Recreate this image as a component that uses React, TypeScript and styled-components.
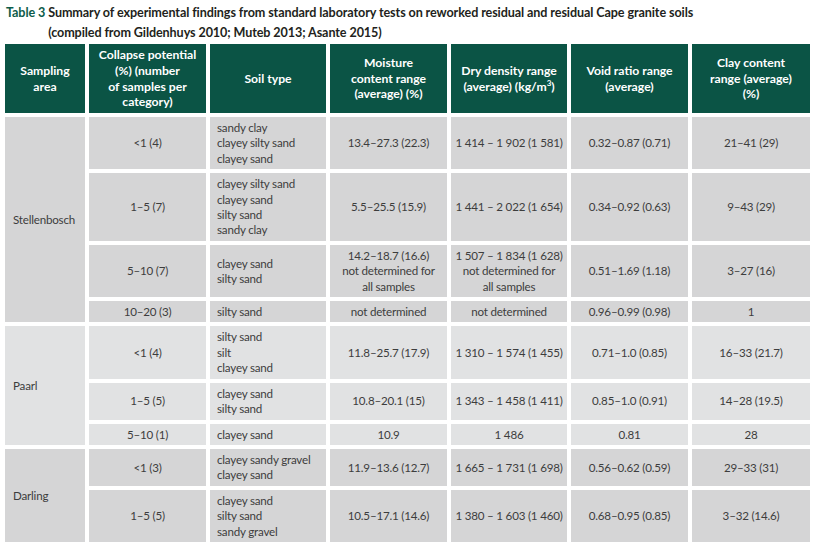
import React from "react";
import styled, { createGlobalStyle } from "styled-components";

const Global = createGlobalStyle`
  html, body { margin: 0; padding: 0; background: #ffffff; }
  body { font-family: Lato, "Open Sans", "Liberation Sans", sans-serif; }
`;

const Page = styled.div`
  width: 814px;
  height: 546px;
  box-sizing: border-box;
  padding: 3px 4px 0 5px;
  overflow: hidden;
`;

const Caption = styled.div`
  display: flex;
  align-items: flex-start;
  font-family: Lato, sans-serif;
  font-weight: 700;
  font-size: 12.6px;
  letter-spacing: -0.1px;
  line-height: 20px;
  color: #231f20;
  padding-left: 1px;
  margin-bottom: 1px;
`;

const CaptionLabel = styled.span`
  color: #0d5c4a;
  white-space: pre;
`;

const CaptionText = styled.span`
  display: block;
`;

const Grid = styled.div`
  display: grid;
  grid-template-columns: 80px 117px 116px 117px 116px 117px 118px;
  column-gap: 4px;
  row-gap: 4px;
`;

const Head = styled.div`
  background: #0b5445;
  color: #ffffff;
  font-weight: 700;
  font-size: 12.2px;
  line-height: 15.6px;
  padding: 3px 2px;
  display: flex;
  align-items: center;
  justify-content: center;
  text-align: center;
  min-height: 63px;
  white-space: nowrap;
`;

const Sup = styled.sup`
  font-size: 8px;
  line-height: 0;
`;

const Cell = styled.div<{ $tone: "dark" | "light"; $align?: "left" | "center"; $span?: number }>`
  background: ${(p) => (p.$tone === "dark" ? "#d5d5d6" : "#e1e2e3")};
  color: #3d3d3d;
  font-size: 11.6px;
  letter-spacing: -0.2px;
  line-height: 15.4px;
  padding: 3px 7px;
  display: flex;
  flex-direction: column;
  justify-content: center;
  white-space: nowrap;
  align-items: ${(p) => (p.$align === "left" ? "flex-start" : "center")};
  text-align: ${(p) => (p.$align === "left" ? "left" : "center")};
  ${(p) => (p.$span ? `grid-row: span ${p.$span};` : "")}
`;

const AreaCell = styled(Cell)`
  padding-left: 8px;
  padding-right: 2px;
`;

type Row = {
  cp: string;
  soil: string[];
  moist: string[];
  dry: string[];
  void: string;
  clay: string;
};

type Group = { area: string; tone: "dark" | "light"; rows: Row[] };

const groups: Group[] = [
  {
    area: "Stellenbosch",
    tone: "dark",
    rows: [
      {
        cp: "<1 (4)",
        soil: ["sandy clay", "clayey silty sand", "clayey sand"],
        moist: ["13.4–27.3 (22.3)"],
        dry: ["1 414 – 1 902 (1 581)"],
        void: "0.32–0.87 (0.71)",
        clay: "21–41 (29)",
      },
      {
        cp: "1–5 (7)",
        soil: ["clayey silty sand", "clayey sand", "silty sand", "sandy clay"],
        moist: ["5.5–25.5 (15.9)"],
        dry: ["1 441 – 2 022 (1 654)"],
        void: "0.34–0.92 (0.63)",
        clay: "9–43 (29)",
      },
      {
        cp: "5–10 (7)",
        soil: ["clayey sand", "silty sand"],
        moist: ["14.2–18.7 (16.6)", "not determined for", "all samples"],
        dry: ["1 507 – 1 834 (1 628)", "not determined for", "all samples"],
        void: "0.51–1.69 (1.18)",
        clay: "3–27 (16)",
      },
      {
        cp: "10–20 (3)",
        soil: ["silty sand"],
        moist: ["not determined"],
        dry: ["not determined"],
        void: "0.96–0.99 (0.98)",
        clay: "1",
      },
    ],
  },
  {
    area: "Paarl",
    tone: "light",
    rows: [
      {
        cp: "<1 (4)",
        soil: ["silty sand", "silt", "clayey sand"],
        moist: ["11.8–25.7 (17.9)"],
        dry: ["1 310 – 1 574 (1 455)"],
        void: "0.71–1.0 (0.85)",
        clay: "16–33 (21.7)",
      },
      {
        cp: "1–5 (5)",
        soil: ["clayey sand", "silty sand"],
        moist: ["10.8–20.1 (15)"],
        dry: ["1 343 – 1 458 (1 411)"],
        void: "0.85–1.0 (0.91)",
        clay: "14–28 (19.5)",
      },
      {
        cp: "5–10 (1)",
        soil: ["clayey sand"],
        moist: ["10.9"],
        dry: ["1 486"],
        void: "0.81",
        clay: "28",
      },
    ],
  },
  {
    area: "Darling",
    tone: "dark",
    rows: [
      {
        cp: "<1 (3)",
        soil: ["clayey sandy gravel", "clayey sand"],
        moist: ["11.9–13.6 (12.7)"],
        dry: ["1 665 – 1 731 (1 698)"],
        void: "0.56–0.62 (0.59)",
        clay: "29–33 (31)",
      },
      {
        cp: "1–5 (5)",
        soil: ["clayey sand", "silty sand", "sandy gravel"],
        moist: ["10.5–17.1 (14.6)"],
        dry: ["1 380 – 1 603 (1 460)"],
        void: "0.68–0.95 (0.85)",
        clay: "3–32 (14.6)",
      },
    ],
  },
];

const Lines = ({ items }: { items: string[] }) => (
  <>
    {items.map((t, i) => (
      <span key={i}>{t}</span>
    ))}
  </>
);

export default function App() {
  return (
    <Page>
      <Global />
      <Caption>
        <CaptionLabel>Table 3 </CaptionLabel>
        <CaptionText>
          Summary of experimental findings from standard laboratory tests on reworked residual and residual Cape granite soils
          <br />
          (compiled from Gildenhuys 2010; Muteb 2013; Asante 2015)
        </CaptionText>
      </Caption>
      <Grid>
        <Head>Sampling<br />area</Head>
        <Head>Collapse potential<br />(%) (number<br />of samples per<br />category)</Head>
        <Head>Soil type</Head>
        <Head>Moisture<br />content range<br />(average) (%)</Head>
        <Head>
          <span>
            Dry density range<br />(average) (kg/m<Sup>3</Sup>)
          </span>
        </Head>
        <Head>Void ratio range<br />(average)</Head>
        <Head>Clay content<br />range (average)<br />(%)</Head>
        {groups.map((g) =>
          g.rows.map((r, i) => (
            <React.Fragment key={g.area + i}>
              {i === 0 && (
                <AreaCell $tone={g.tone} $align="left" $span={g.rows.length}>
                  {g.area}
                </AreaCell>
              )}
              <Cell $tone={g.tone}>{r.cp}</Cell>
              <Cell $tone={g.tone} $align="left">
                <Lines items={r.soil} />
              </Cell>
              <Cell $tone={g.tone}>
                <Lines items={r.moist} />
              </Cell>
              <Cell $tone={g.tone}>
                <Lines items={r.dry} />
              </Cell>
              <Cell $tone={g.tone}>{r.void}</Cell>
              <Cell $tone={g.tone}>{r.clay}</Cell>
            </React.Fragment>
          ))
        )}
      </Grid>
    </Page>
  );
}
